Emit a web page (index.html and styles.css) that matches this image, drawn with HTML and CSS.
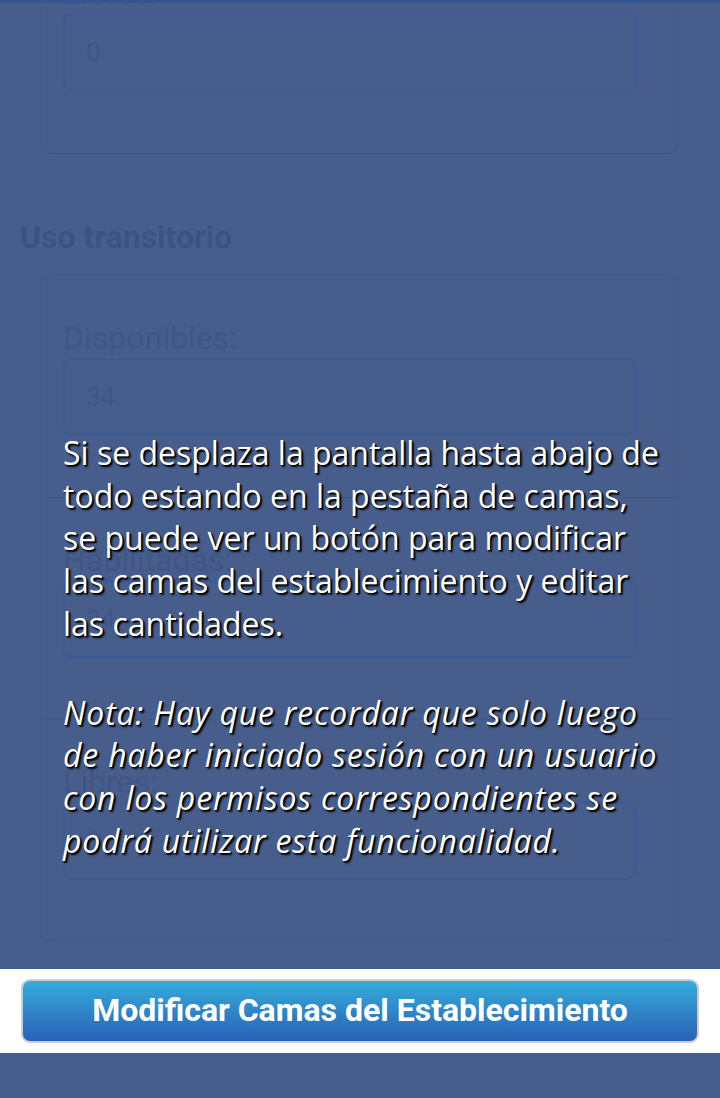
FILE: index.html
```html
<!DOCTYPE html>
<html lang="es">
<head>
<meta charset="utf-8">
<title>Camas del Establecimiento</title>
<link rel="stylesheet" href="styles.css">
</head>
<body>
<div class="topbar"></div>
<main class="page">
  <section class="card card-prev">
    <div class="field">
      <label class="field-label">Libres:</label>
      <div class="field-input">0</div>
    </div>
  </section>

  <h2 class="section-title">Uso transitorio</h2>

  <section class="card">
    <div class="field">
      <label class="field-label">Disponibles:</label>
      <div class="field-input">34</div>
    </div>
    <div class="field">
      <label class="field-label">Habilitadas:</label>
      <div class="field-input">34</div>
    </div>
    <div class="field">
      <label class="field-label">Libres:</label>
      <div class="field-input">0</div>
    </div>
  </section>

  <div class="action-bar">
    <button class="btn-primary">Modificar Camas del Establecimiento</button>
  </div>
</main>

<div class="tutorial">
  <p class="tutorial-text">Si se desplaza la pantalla hasta abajo de<br>todo estando en la pestaña de camas,<br>se puede ver un botón para modificar<br>las camas del establecimiento y editar<br>las cantidades.</p>
  <p class="tutorial-text tutorial-note">Nota: Hay que recordar que solo luego<br>de haber iniciado sesión con un usuario<br>con los permisos correspondientes se<br>podrá utilizar esta funcionalidad.</p>
</div>
</body>
</html>
```

FILE: styles.css
```css
html, body {
  margin: 0;
  padding: 0;
}

body {
  background: #475e8c;
  font-family: Roboto, "Liberation Sans", sans-serif;
  width: 720px;
  height: 1098px;
  overflow: hidden;
  position: relative;
}

.topbar {
  position: fixed;
  top: 0;
  left: 0;
  right: 0;
  height: 3px;
  background: #37548f;
  z-index: 2;
}

.page {
  display: flex;
  flex-direction: column;
}

.card {
  margin: 0 41px 0 40px;
  border: 1.5px solid #42588a;
  border-radius: 10px;
  display: flex;
  flex-direction: column;
}

.card-prev {
  margin-top: -70px;
  border-top-left-radius: 0;
  border-top-right-radius: 0;
  padding-bottom: 1px;
}

.field {
  padding: 44px 42px 61px 22px;
  border-bottom: 1px solid #43598b;
  display: flex;
  flex-direction: column;
  gap: 2px;
}

.field:last-child {
  border-bottom: none;
}

.field-label {
  font-size: 32px;
  line-height: 36px;
  color: #3f5687;
}

.field-input {
  height: 78px;
  box-sizing: border-box;
  border: 2px solid #3d5a98;
  border-radius: 9px;
  padding: 0 21px;
  display: flex;
  align-items: center;
  font-size: 26px;
  color: #3f5687;
}

.section-title {
  margin: 65px 0 20px 20px;
  font-size: 32px;
  line-height: 36px;
  font-weight: 700;
  color: #3c5283;
}

.action-bar {
  margin-top: 27px;
  background: #ffffff;
  padding: 10px 21px;
  display: flex;
}

.btn-primary {
  flex: 1;
  height: 64px;
  border: 2px solid #cdcdcd;
  border-radius: 9px;
  background: linear-gradient(to bottom, #35acdc 0%, #2f86c8 50%, #2a61b7 100%);
  color: #ffffff;
  font-family: Roboto, "Liberation Sans", sans-serif;
  font-weight: 700;
  font-size: 32px;
  padding: 0 0 2px;
}

.tutorial {
  position: absolute;
  left: 63px;
  top: 432px;
}

.tutorial-text {
  margin: 0;
  font-family: "Open Sans", "Noto Sans", sans-serif;
  font-size: 32px;
  font-weight: 500;
  line-height: 42.7px;
  letter-spacing: 0;
  color: #ffffff;
  white-space: nowrap;
  text-shadow: 2px 2px 2px #000000, 1px 1px 1px #000000;
}

.tutorial-note {
  margin-top: 46px;
  font-style: italic;
  letter-spacing: 0.8px;
}
```
